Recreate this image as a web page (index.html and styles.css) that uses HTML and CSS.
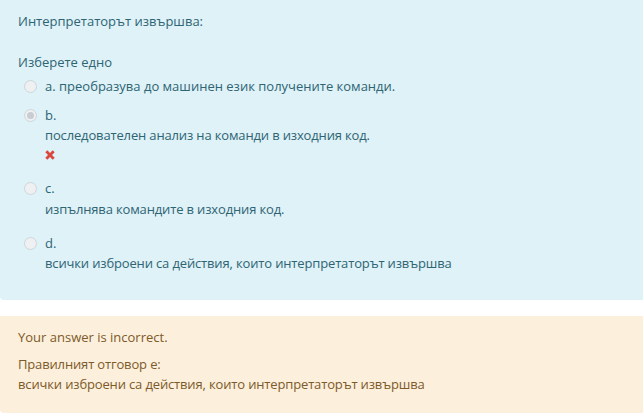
FILE: index.html
```html
<!DOCTYPE html>
<html lang="bg">
<head>
<meta charset="utf-8">
<link rel="stylesheet" href="styles.css">
</head>
<body>
<div class="formulation">
  <div class="qtext">Интерпретаторът извършва:</div>
  <div class="prompt">Изберете едно</div>
  <div class="answers">
    <div class="option">
      <span class="radio"></span>
      <div class="label">а. преобразува до машинен език получените команди.</div>
    </div>
    <div class="option opt-b">
      <span class="radio checked"></span>
      <div class="label">
        <div class="num">b.</div>
        <div class="text">последователен анализ на команди в изходния код.</div>
        <div class="icon"><svg width="10" height="10" viewBox="0 0 10 10"><path d="M0.3 2.3 2.3 0.3 5 3 7.7 0.3 9.7 2.3 7 5 9.7 7.7 7.7 9.7 5 7 2.3 9.7 0.3 7.7 3 5Z" fill="#d9473f"/></svg></div>
      </div>
    </div>
    <div class="option opt-c">
      <span class="radio"></span>
      <div class="label">
        <div class="num">c.</div>
        <div class="text">изпълнява командите в изходния код.</div>
      </div>
    </div>
    <div class="option opt-d">
      <span class="radio"></span>
      <div class="label">
        <div class="num">d.</div>
        <div class="text">всички изброени са действия, които интерпретаторът извършва</div>
      </div>
    </div>
  </div>
</div>
<div class="outcome">
  <div class="feedback">Your answer is incorrect.</div>
  <div class="right">Правилният отговор е:<br>всички изброени са действия, които интерпретаторът извършва</div>
</div>
</body>
</html>
```
FILE: styles.css
```css
html, body {
  margin: 0;
  padding: 0;
  background: #fff;
  overflow: hidden;
}
body {
  font-family: "Open Sans", "Noto Sans", sans-serif;
  font-size: 13px;
  line-height: 20px;
}
.formulation {
  background: #def2f8;
  color: #2f6473;
  padding: 11px 18px 24px 18px;
  border-radius: 0 0 0 4px;
  height: 265px;
}
.qtext {
  margin-bottom: 21px;
}
.prompt {
  margin-bottom: 4px;
}
.option {
  display: flex;
  align-items: flex-start;
  padding-left: 6px;
}
.radio {
  width: 11px;
  height: 11px;
  border-radius: 50%;
  border: 1px solid #cfd6da;
  background: #eef0f2;
  margin-top: 4px;
  margin-right: 8px;
  flex: none;
  position: relative;
}
.radio.checked::after {
  content: "";
  position: absolute;
  left: 2px;
  top: 2px;
  width: 7px;
  height: 7px;
  border-radius: 50%;
  background: #c8cdd1;
}
.text {
  letter-spacing: -0.15px;
}
.opt-b { margin-top: 9px; }
.opt-c { margin-top: 13px; }
.opt-d { margin-top: 14px; }
.opt-c .text { margin-top: 1px; }
.icon {
  height: 20px;
  display: flex;
  align-items: center;
  padding-left: 0;
}
.outcome {
  margin-top: 16px;
  background: #fcefdc;
  color: #7d5a29;
  padding: 11px 18px 19px 18px;
  border-radius: 0 0 0 4px;
}
.feedback {
  margin-bottom: 7px;
}
.right {
  letter-spacing: -0.15px;
}
```
